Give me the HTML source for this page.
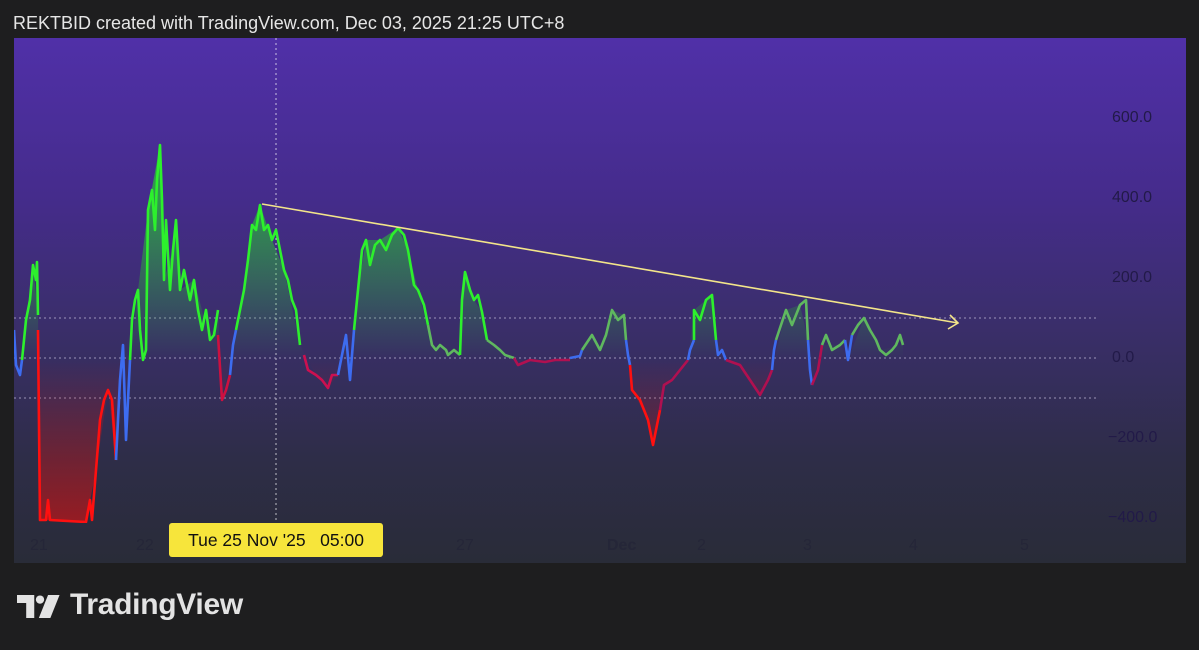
<!DOCTYPE html>
<html><head><meta charset="utf-8"><style>
body{margin:0;width:1199px;height:650px;background:#1e1e1f;overflow:hidden;font-family:"Liberation Sans",sans-serif;position:relative}
.hdr{position:absolute;left:13px;top:13px;font-size:18px;color:#e6e6e6}
.chart{position:absolute;left:14px;top:38px;width:1172px;height:525px;background:linear-gradient(#5030a8 0%,#452c8c 30%,#3a2e6a 55%,#2e2d48 80%,#292c38 100%)}
.yl{position:absolute;left:1112px;font-size:16px;color:#221a48}
.xl{position:absolute;top:537px;font-size:16px;color:#252638}
.tip{position:absolute;left:169px;top:523px;width:214px;height:34px;background:#f7e53b;border-radius:3px;font-size:17.5px;color:#111;line-height:34px;text-align:center;white-space:pre}
.logo{position:absolute;left:70px;top:588px;font-size:30px;font-weight:bold;color:#e3e3e3;letter-spacing:-0.3px}
</style></head><body>
<div class="hdr">REKTBID created with TradingView.com, Dec 03, 2025 21:25 UTC+8</div>
<div class="chart"></div>
<svg style="position:absolute;left:0;top:0" width="1199" height="650">
<defs>
<linearGradient id="f" gradientUnits="userSpaceOnUse" x1="0" y1="200" x2="0" y2="525">
<stop offset="0" stop-color="#22e022" stop-opacity=".6"/>
<stop offset="0.49" stop-color="#22e022" stop-opacity="0"/>
<stop offset="0.49" stop-color="#e01010" stop-opacity="0"/>
<stop offset="1" stop-color="#e01010" stop-opacity=".6"/>
</linearGradient>
<clipPath id="c"><rect x="14" y="38" width="1172" height="485"/></clipPath>
</defs>
<g stroke="#c8c0e0" stroke-width="1" stroke-dasharray="2 3" opacity=".7">
<line x1="14" y1="318" x2="1098" y2="318"/><line x1="14" y1="358" x2="1098" y2="358"/><line x1="14" y1="398" x2="1098" y2="398"/>
<line x1="276" y1="38" x2="276" y2="523" stroke="#fff" opacity="1"/>
</g>
<g clip-path="url(#c)">
<polygon fill="url(#f)" points="14,358 14,330 20,375 26,320 33,265 38,315 40,520 86,522 96,470 108,390 116,460 123,345 130,360 138,290 148,210 160,145 164,280 173,250 176,220 180,290 194,280 210,340 218,310 222,400 233,345 244,290 252,225 260,205 272,240 284,270 300,345 316,375 328,388 338,375 346,335 350,380 358,290 366,240 380,240 398,228 408,250 418,290 432,345 446,350 460,355 465,272 474,300 482,312 487,340 505,355 530,360 555,360 580,356 592,335 600,350 612,310 624,315 632,390 648,420 653,445 664,385 688,360 694,310 712,295 716,340 726,360 750,380 760,395 772,370 786,310 800,305 808,340 812,385 822,345 840,345 848,360 864,318 880,350 903,345 903,358"/>
<g fill="none" stroke-width="2.6" stroke-linejoin="round">
<polyline stroke="#3d6cf0" points="14,330 16,365 20,375 22,360"/>
<polyline stroke="#2df02d" points="22,360 26,320 30,300 33,265 36,280 37,262 38,315"/>
<polyline stroke="#ff1010" points="38,330 40,520 46,520 48,500 50,520 86,522 90,500 92,520 96,470 100,420 104,400 108,390 112,400 116,460"/>
<polyline stroke="#3d6cf0" points="116,460 120,380 123,345 126,440 130,360"/>
<polyline stroke="#2df02d" points="130,360 132,320 135,300 138,290 140,330 143,360 146,350 148,210 152,190 155,230 157,180 160,145 162,200 164,280 166,220 170,290 173,250 176,220 180,290 184,270 188,290 190,300 194,280 198,310 202,330 206,310 210,340 214,335 218,310"/>
<polyline stroke="#cc1040" points="218,335 222,400 226,390 230,375"/>
<polyline stroke="#3d6cf0" points="230,375 233,345 236,330"/>
<polyline stroke="#2df02d" points="236,330 240,310 244,290 248,260 252,225 256,230 260,205 264,230 268,225 272,240 276,230 280,250 284,270 288,280 292,300 296,310 300,345"/>
<polyline stroke="#cc1050" points="304,355 308,370 316,375 322,380 328,388 332,375 338,375"/>
<polyline stroke="#3d6cf0" points="338,375 342,355 346,335 350,380 354,330"/>
<polyline stroke="#2df02d" points="354,330 358,290 362,250 366,240 370,265 375,245 380,240 386,250 392,235 398,228 404,235 408,250 414,285 418,290 424,305 428,325"/>
<polyline stroke="#5fb85f" points="428,325 432,345 436,350 440,345 446,350 448,355 454,350 460,355"/>
<polyline stroke="#2df02d" points="460,355 462,300 465,272 470,290 474,300 478,295 482,312 487,340"/>
<polyline stroke="#5fb85f" points="487,340 494,345 500,350 505,355 514,358"/>
<polyline stroke="#b01050" points="514,358 518,365 530,360 545,362 555,360 570,360"/>
<polyline stroke="#3d6cf0" points="570,358 580,356 582,350"/>
<polyline stroke="#5fb85f" points="582,350 592,335 600,350 606,335 612,310 618,320 624,315 626,340"/>
<polyline stroke="#3d6cf0" points="626,340 628,355 630,365"/>
<polyline stroke="#ff1010" points="630,365 632,390 640,400 648,420 653,445 656,430 660,410"/>
<polyline stroke="#b01050" points="660,410 664,385 672,380 680,370 688,360"/>
<polyline stroke="#3d6cf0" points="688,360 690,350 694,340"/>
<polyline stroke="#2df02d" points="694,340 694,310 700,320 706,300 712,295 716,340"/>
<polyline stroke="#3d6cf0" points="716,340 718,355 722,350 726,360"/>
<polyline stroke="#b01050" points="726,360 740,365 750,380 760,395 768,380 772,370"/>
<polyline stroke="#3d6cf0" points="772,370 774,350 776,340"/>
<polyline stroke="#5fb85f" points="776,340 786,310 792,325 800,305 806,300 808,340"/>
<polyline stroke="#3d6cf0" points="808,340 810,370 812,385"/>
<polyline stroke="#b01050" points="812,385 818,370 822,345"/>
<polyline stroke="#5fb85f" points="822,345 826,335 832,350 840,345 845,340"/>
<polyline stroke="#3d6cf0" points="845,340 848,360 852,335"/>
<polyline stroke="#5fb85f" points="852,335 858,325 864,318 870,330 876,340 880,350 886,355 892,350 896,345 900,335 903,345"/>
</g>
</g>
<g stroke="#f3e58a" stroke-width="1.6" fill="none">
<line x1="262" y1="204" x2="958" y2="323"/>
<polyline points="950,315 958,323 948,329"/>
</g>
<g transform="translate(17,595) scale(1.15)" fill="#e3e3e3">
<path d="M0 0H15V20H8V7H0Z"/><circle cx="20" cy="4" r="3.6"/><path d="M27 0H37L29 20H19Z"/>
</g>
</svg>
<div class="yl" style="top:109px">600.0</div>
<div class="yl" style="top:189px">400.0</div>
<div class="yl" style="top:269px">200.0</div>
<div class="yl" style="top:349px">0.0</div>
<div class="yl" style="top:429px;left:1108px">−200.0</div>
<div class="yl" style="top:509px;left:1108px;height:14px;overflow:hidden">−400.0</div>
<div class="xl" style="left:30px">21</div>
<div class="xl" style="left:136px">22</div>
<div class="xl" style="left:456px">27</div>
<div class="xl" style="left:607px;font-weight:bold">Dec</div>
<div class="xl" style="left:697px">2</div>
<div class="xl" style="left:803px">3</div>
<div class="xl" style="left:909px">4</div>
<div class="xl" style="left:1020px">5</div>
<div class="tip">Tue 25 Nov '25   05:00</div>
<div class="logo">TradingView</div>
</body></html>
